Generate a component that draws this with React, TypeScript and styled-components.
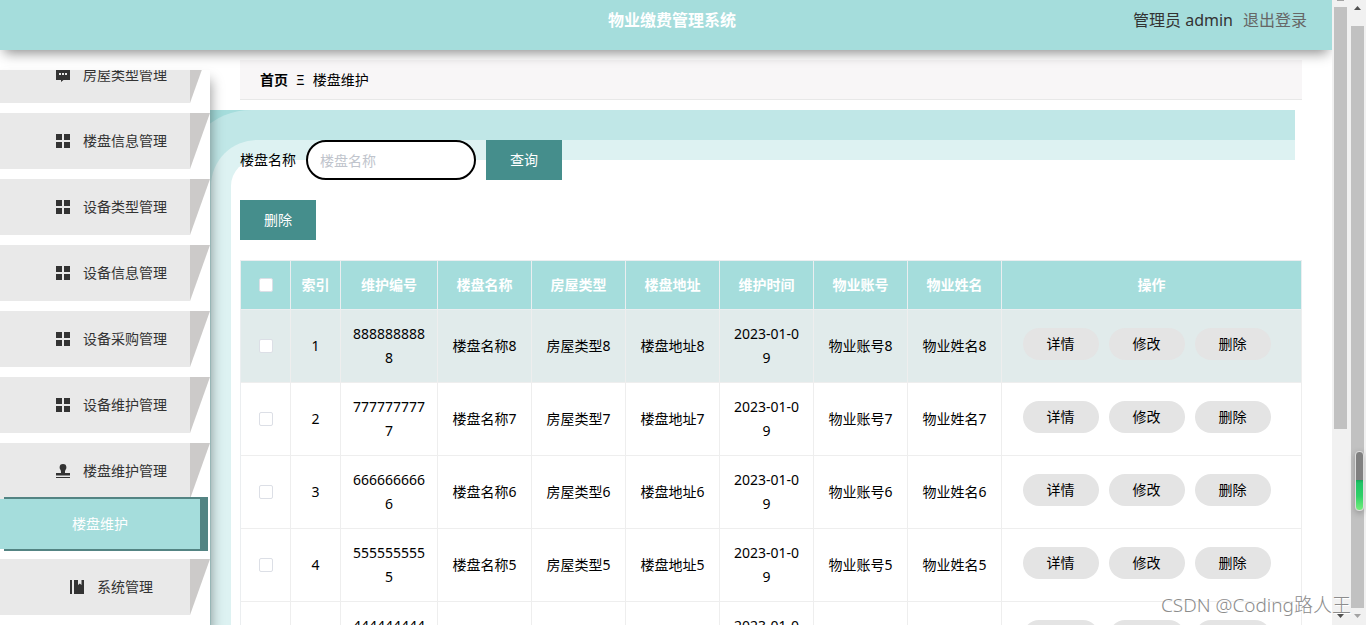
import React from "react";
import styled, { createGlobalStyle } from "styled-components";

const GlobalStyle = createGlobalStyle`
  * { box-sizing: border-box; }
  body {
    margin: 0;
    background: #fff;
    color: #000;
    font: 14px/24px "Noto Sans", "Noto Sans CJK SC", sans-serif;
  }
  button, input { font: inherit; }
`;

const Window = styled.div`
  position: relative;
  display: flex;
  height: 100vh;
  overflow: hidden;
`;

const Page = styled.div`
  flex: 1;
  min-width: 0;
  display: flex;
  flex-direction: column;
  overflow: hidden;
`;

const Header = styled.header`
  position: relative;
  z-index: 3;
  flex: none;
  height: 50px;
  padding: 0 25px 10px 37px;
  display: grid;
  grid-template-columns: 1fr auto 1fr;
  align-items: center;
  background: #a5dddc;
  box-shadow: 0 7px 12px -4px rgba(0, 0, 0, 0.45);
  font-size: 16px;
`;

const Title = styled.h1`
  grid-column: 2;
  margin: 0;
  font-size: 16px;
  font-weight: 700;
  color: #fff;
`;

const Account = styled.div`
  justify-self: end;
  display: flex;
  gap: 10px;
  color: #333;
`;

const Logout = styled.a`
  color: #666;
  text-decoration: none;
`;

const Body = styled.div`
  flex: 1;
  min-height: 0;
  display: flex;
`;

const Sidebar = styled.nav`
  position: relative;
  z-index: 2;
  flex: none;
  width: 210px;
  margin-top: 20px;
  background: #fff;
  box-shadow: 1px 10px 12px rgba(0, 0, 0, 0.4);
`;

const MenuViewport = styled.div`
  height: 100%;
  overflow: hidden;
`;

const Menu = styled.ul`
  margin: -23px 0 0;
  padding: 0;
  list-style: none;
`;

const MenuEntry = styled.li`
  margin-bottom: 10px;
`;

const MenuLink = styled.a`
  height: 56px;
  padding-left: 13px;
  display: flex;
  align-items: center;
  justify-content: center;
  gap: 13px;
  color: #333;
  text-decoration: none;
  background: linear-gradient(90deg, #e9e9e9 190px, #cccac9 190px);
  clip-path: polygon(0 0, 100% 0, 190px 100%, 0 100%);
`;

const SubLink = styled.a`
  position: relative;
  display: block;
  width: 200px;
  line-height: 50px;
  text-align: center;
  color: #fff;
  text-decoration: none;
  background: #a5dddc;
  box-shadow: 6px 0 0 2px #538483;
`;

const Content = styled.main`
  flex: 1;
  min-width: 0;
  padding-top: 10px;
`;

const Breadcrumb = styled.div`
  height: 40px;
  margin: 0 30px 10px;
  padding: 0 20px;
  display: flex;
  align-items: center;
  gap: 8px;
  background: #f8f6f7;
  border-bottom: 1px solid #e8e8e8;
`;

const HomeLink = styled.a`
  font-weight: 700;
  color: #000;
  text-decoration: none;
`;

const Panel = styled.section`
  position: relative;
  padding: 30px 30px 0;
  display: flex;
  flex-direction: column;
  align-items: flex-start;
  gap: 20px;

  /* rounded bands framing the top left corner */
  &::before {
    content: "";
    position: absolute;
    z-index: -1;
    inset: 50px 37px 0 21px;
    background: #fff;
    border-top-left-radius: 26px;
    box-shadow: 0 0 0 20px #ddf2f2, 0 0 0 50px #c0e7e7, 0 0 0 90px #a5dddc;
    clip-path: inset(-50px 0 0 -21px);
  }
`;

const SearchForm = styled.form`
  display: flex;
  align-items: center;
  gap: 10px;
`;

const TextInput = styled.input`
  width: 170px;
  height: 40px;
  padding: 0 12px;
  border: 2px solid #000;
  border-radius: 20px;
  background: #fff;
  outline: none;
  &::placeholder { color: #c0c4cc; opacity: 1; }
`;

const SolidButton = styled.button`
  width: 76px;
  height: 40px;
  padding: 0;
  border: 0;
  background: #458e8c;
  color: #fff;
`;

const Table = styled.table`
  width: 100%;
  table-layout: fixed;
  border-collapse: separate;
  border-spacing: 0;
  border: solid #ebeef0;
  border-width: 1px 0 0 1px;
  text-align: center;
`;

const HeadCell = styled.th`
  padding: 12px 0;
  border: solid #ebeef0;
  border-width: 0 1px 1px 0;
  background: #a5dddc;
  color: #fff;
  font-weight: 700;
`;

const Cell = styled.td`
  padding: 12px 11px;
  border: solid #eee;
  border-width: 0 1px 1px 0;
  word-break: break-all;
`;

const Row = styled.tr<{ $active?: boolean }>`
  background: ${(p) => (p.$active ? "#e1ebeb" : "transparent")};
`;

const Tick = styled.input`
  appearance: none;
  display: block;
  width: 14px;
  height: 14px;
  margin: 0 auto;
  border: 1px solid #dcdfe6;
  border-radius: 2px;
  background: #fff;
`;

const Actions = styled.div`
  display: flex;
  justify-content: center;
  gap: 10px;
  padding: 0 10px 4px 0;
`;

const PillButton = styled.button`
  width: 76px;
  height: 32px;
  padding: 0;
  border: 0;
  border-radius: 16px;
  background: #e4e4e4;
  color: #000;
`;

const ScrollTrack = styled.div`
  flex: none;
  width: 17px;
  display: flex;
  flex-direction: column;
  background: #f1f1f1;
`;

const ScrollEnd = styled.div<{ $size: number; $up?: boolean; $color: string }>`
  flex: none;
  height: ${(p) => p.$size}px;
  display: flex;
  justify-content: center;
  align-items: flex-start;
  padding-top: ${(p) => (p.$size < 10 ? 0 : 6)}px;
  overflow: hidden;
  &::before {
    content: "";
    width: 7px;
    height: ${(p) => (p.$size < 10 ? 1 : 4)}px;
    background: ${(p) => p.$color};
    clip-path: ${(p) =>
      p.$size < 10
        ? "none"
        : p.$up
        ? "polygon(50% 0, 100% 100%, 0 100%)"
        : "polygon(0 0, 100% 0, 50% 100%)"};
  }
`;

const Thumb = styled.div<{ $share: number }>`
  flex: ${(p) => p.$share} 0 0;
  margin: 0 2px;
  background: #c1c1c1;
`;

const TrackRest = styled.div<{ $share: number }>`
  flex: ${(p) => p.$share} 0 0;
`;

const Gauge = styled.div`
  position: absolute;
  z-index: 4;
  right: 2px;
  top: 451px;
  width: 9px;
  height: 60px;
  border: 1px solid #ddd;
  border-radius: 4px;
  background: linear-gradient(#808080 28px, #17a558 28px, #20c466 31px, #2fd068 44px, #74ee7c 100%);
  box-shadow: 0 2px 6px rgba(0, 0, 0, 0.25);
`;

const Watermark = styled.div`
  position: absolute;
  z-index: 5;
  right: 15px;
  bottom: 8px;
  font-size: 19px;
  font-weight: 300;
  color: #8c8c8c;
  text-shadow: 1px 1px 0 #fff;
  pointer-events: none;
`;

const iconPaths: Record<string, string> = {
  grid: "M0 0h6v6H0zM8 0h6v6H8zM0 8h6v6H0zM8 8h6v6H8z",
  chat: "M0 1h14v11H7.5L5 14V12H0zM3 5v2h2V5zM6 5v2h2V5zM9 5v2h2V5z",
  stamp:
    "M7 0a3.400 3.400 0 0 1 3.400 3.400C10.400 5.200 9 5.800 9 7.500V9H14v2.500H0V9H5V7.500C5 5.800 3.600 5.200 3.600 3.400A3.400 3.400 0 0 1 7 0zM0 13h14v1H0z",
  book: "M0 0h2v14H0zM4 0h4v5l1.800-1.500L11.500 5V0H14v14H4z",
};

function Icon({ name }: { name: string }) {
  return (
    <svg width="14" height="14" viewBox="0 0 14 14" fill="#333" fillRule="evenodd" aria-hidden="true">
      <path d={iconPaths[name]} />
    </svg>
  );
}

const menu = [
  { label: "房屋类型管理", icon: "chat" },
  { label: "楼盘信息管理", icon: "grid" },
  { label: "设备类型管理", icon: "grid" },
  { label: "设备信息管理", icon: "grid" },
  { label: "设备采购管理", icon: "grid" },
  { label: "设备维护管理", icon: "grid" },
  { label: "楼盘维护管理", icon: "stamp", child: "楼盘维护" },
  { label: "系统管理", icon: "book" },
];

const columns = ["维护编号", "楼盘名称", "房屋类型", "楼盘地址", "维护时间", "物业账号", "物业姓名"];
const records = [8, 7, 6, 5, 4];

export default function App() {
  return (
    <>
      <GlobalStyle />
      <Window>
        <Page>
          <Header>
            <Title>物业缴费管理系统</Title>
            <Account>
              <span>管理员 admin</span>
              <Logout href="#logout">退出登录</Logout>
            </Account>
          </Header>
          <Body>
            <Sidebar>
              <MenuViewport>
                <Menu>
                  {menu.map((m) => (
                    <MenuEntry key={m.label}>
                      <MenuLink href="#menu">
                        <Icon name={m.icon} />
                        {m.label}
                      </MenuLink>
                      {m.child && <SubLink href="#sub">{m.child}</SubLink>}
                    </MenuEntry>
                  ))}
                </Menu>
              </MenuViewport>
            </Sidebar>
            <Content>
              <Breadcrumb>
                <HomeLink href="#home">首页</HomeLink>
                <span>Ξ</span>
                <span>楼盘维护</span>
              </Breadcrumb>
              <Panel>
                <SearchForm onSubmit={(e) => e.preventDefault()}>
                  <label htmlFor="estate">楼盘名称</label>
                  <TextInput id="estate" placeholder="楼盘名称" />
                  <SolidButton type="submit">查询</SolidButton>
                </SearchForm>
                <SolidButton type="button">删除</SolidButton>
                <Table>
                  <colgroup>
                    <col style={{ width: 50 }} />
                    <col style={{ width: 50 }} />
                    <col style={{ width: 97 }} />
                    <col span={6} />
                    <col style={{ width: 300 }} />
                  </colgroup>
                  <thead>
                    <tr>
                      <HeadCell>
                        <Tick type="checkbox" aria-label="全选" />
                      </HeadCell>
                      <HeadCell>索引</HeadCell>
                      {columns.map((c) => (
                        <HeadCell key={c}>{c}</HeadCell>
                      ))}
                      <HeadCell>操作</HeadCell>
                    </tr>
                  </thead>
                  <tbody>
                    {records.map((n, i) => (
                      <Row key={n} $active={i === 0}>
                        <Cell>
                          <Tick type="checkbox" aria-label={`选择 ${i + 1}`} />
                        </Cell>
                        <Cell>{i + 1}</Cell>
                        <Cell>{String(n).repeat(10)}</Cell>
                        <Cell>楼盘名称{n}</Cell>
                        <Cell>房屋类型{n}</Cell>
                        <Cell>楼盘地址{n}</Cell>
                        <Cell>2023-01-09</Cell>
                        <Cell>物业账号{n}</Cell>
                        <Cell>物业姓名{n}</Cell>
                        <Cell>
                          <Actions>
                            <PillButton type="button">详情</PillButton>
                            <PillButton type="button">修改</PillButton>
                            <PillButton type="button">删除</PillButton>
                          </Actions>
                        </Cell>
                      </Row>
                    ))}
                  </tbody>
                </Table>
              </Panel>
            </Content>
          </Body>
        </Page>
        <ScrollTrack>
          <ScrollEnd $size={7} $up $color="#a3a3a3" />
          <Thumb $share={422} />
          <TrackRest $share={179} />
          <ScrollEnd $size={17} $color="#505050" />
        </ScrollTrack>
        <ScrollTrack>
          <ScrollEnd $size={26} $up $color="#505050" />
          <Thumb $share={1} />
          <ScrollEnd $size={17} $color="#a3a3a3" />
        </ScrollTrack>
        <Gauge />
        <Watermark>CSDN @Coding路人王</Watermark>
      </Window>
    </>
  );
}
